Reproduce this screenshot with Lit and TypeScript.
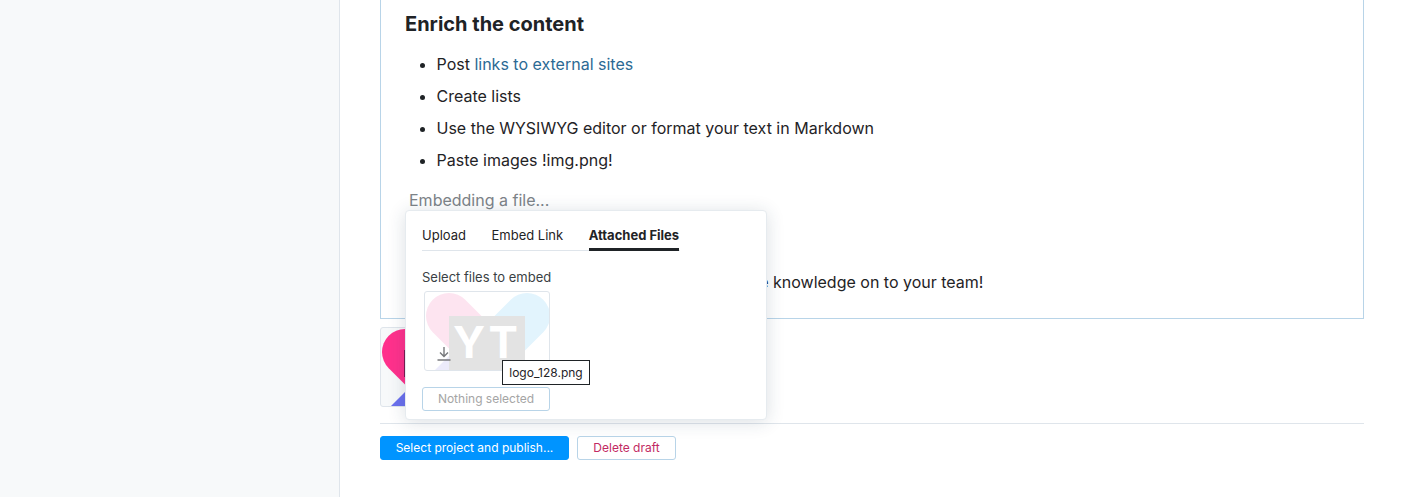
import { LitElement, html, css, svg } from 'lit';
import { customElement } from 'lit/decorators.js';

// same logo artwork for the attachment behind the popup and the faded thumb
const heartLogo = svg`
  <path d="M8 80 L63 25 L100 80 Z" fill="var(--heart-low)"/>
  <path d="M102 24 L66 60" stroke="var(--heart-right)" stroke-width="46" stroke-linecap="round"/>
  <path d="M24 24 L60 60" stroke="var(--heart-left)" stroke-width="46" stroke-linecap="round"/>
`;

@customElement('app-root')
export class AppRoot extends LitElement {
  static styles = css`
    :host {
      display: flex;
      height: 497px;
      overflow: hidden;
      background: #fff;
      color: #1f2326;
      font-family: Inter, "Liberation Sans", sans-serif;
      font-size: 16px;
    }

    .sidebar {
      flex: 0 0 339px;
      background: #f7f9fa;
      border-right: 1px solid #dfe5eb;
    }

    .main {
      flex: 1;
      min-width: 0;
      padding: 0 37px 0 40px;
      position: relative;
    }

    .editor {
      height: 319px;
      box-sizing: border-box;
      border: 1px solid #b8d4e8;
      border-top: none;
      padding: 10px 24px 0;
    }

    h2 {
      margin: 0;
      height: 28px;
      font-size: 20px;
      line-height: 28px;
      font-weight: 700;
    }

    ul {
      margin: 10px 0 0;
      padding-left: 31.5px;
    }

    li {
      height: 32px;
      line-height: 32px;
    }

    a {
      color: #2c6a94;
      text-decoration: none;
    }

    .embedding {
      margin: 12px 0 0 4px;
      line-height: 24px;
      color: #7d8388;
    }

    .closing {
      margin: 58px 0 0 339.5px;
      line-height: 24px;
      white-space: nowrap;
    }

    .attachment {
      width: 126px;
      height: 80px;
      margin-top: 8px;
      box-sizing: border-box;
      border: 1px solid #dfe5eb;
      border-radius: 3px;
      background: #f7f9fa;
      overflow: hidden;
      --heart-left: #ff318c;
      --heart-right: #6fc9f5;
      --heart-low: #6b70ee;
    }

    .attachment svg {
      display: block;
      width: 124px;
      height: 78px;
    }

    .footer {
      margin-top: 16px;
      padding-top: 12px;
      border-top: 1px solid #dfe5eb;
      display: flex;
      gap: 8px;
    }

    button {
      height: 24px;
      box-sizing: border-box;
      border-radius: 3px;
      font-family: inherit;
      font-size: 12px;
      line-height: 22px;
      padding: 0;
    }

    .primary {
      width: 189px;
      border: 1px solid #0094ff;
      background: #0094ff;
      color: #fff;
    }

    .danger {
      width: 99px;
      border: 1px solid #b8d4e8;
      background: #fff;
      color: #c22a63;
    }

    .popup {
      position: absolute;
      left: 65px;
      top: 210px;
      width: 362px;
      height: 210px;
      box-sizing: border-box;
      padding: 12px 16px 0;
      background: #fff;
      border: 1px solid #e6ebef;
      border-radius: 4px;
      box-shadow: 0 2px 18px rgba(31, 55, 80, 0.16);
      font-size: 13px;
    }

    .tabs {
      display: flex;
      gap: 25.5px;
      width: 258px;
      height: 27px;
      border-bottom: 1px solid #dfe5eb;
    }

    .tab {
      line-height: 25px;
      height: 28px;
      box-sizing: border-box;
      white-space: nowrap;
    }

    .tab.active {
      font-weight: 700;
      border-bottom: 3px solid #1f2326;
    }

    .label {
      margin-top: 16px;
      line-height: 20px;
      color: #3a3f44;
    }

    .thumb {
      position: relative;
      width: 126px;
      height: 80px;
      margin: 4px 0 0 2px;
      box-sizing: border-box;
      border: 1px solid #dfe5eb;
      border-radius: 3px;
      overflow: hidden;
      --heart-left: #fde4f0;
      --heart-right: #e2f4fd;
      --heart-low: #ecebfb;
    }

    .thumb > svg.art {
      display: block;
      width: 124px;
      height: 78px;
    }

    .yt {
      position: absolute;
      left: 24px;
      top: 24px;
      width: 76px;
      height: 54px;
      background: #e3e3e3;
      color: #fff;
      font-size: 44px;
      font-weight: 700;
      line-height: 52px;
      letter-spacing: 3px;
      text-align: center;
    }

    .download {
      position: absolute;
      left: 12px;
      top: 54px;
      width: 14px;
      height: 16px;
    }

    .tip {
      position: absolute;
      left: 96px;
      top: 149px;
      width: 88px;
      height: 25px;
      box-sizing: border-box;
      border: 1px solid #1f2326;
      background: #fff;
      font-size: 12px;
      line-height: 23px;
      text-align: center;
      white-space: nowrap;
    }

    .none {
      display: block;
      width: 128px;
      margin-top: 16px;
      border: 1px solid #b8d4e8;
      background: #fff;
      color: #a5a5a5;
    }
  `;

  render() {
    return html`
      <div class="sidebar"></div>
      <div class="main">
        <div class="editor">
          <h2>Enrich the content</h2>
          <ul>
            <li>Post <a href="#">links to external sites</a></li>
            <li>Create lists</li>
            <li>Use the WYSIWYG editor or format your text in Markdown</li>
            <li>Paste images !img.png!</li>
          </ul>
          <div class="embedding">Embedding a file...</div>
          <div class="closing">the knowledge on to your team!</div>
        </div>

        <div class="attachment">
          <svg viewBox="0 0 124 78">
            ${heartLogo}
            <rect x="23" y="22" width="1" height="27" fill="#7a1a50"/>
          </svg>
        </div>

        <div class="footer">
          <button class="primary">Select project and publish...</button>
          <button class="danger">Delete draft</button>
        </div>

        <div class="popup">
          <div class="tabs">
            <div class="tab">Upload</div>
            <div class="tab">Embed Link</div>
            <div class="tab active">Attached Files</div>
          </div>
          <div class="label">Select files to embed</div>
          <div class="thumb">
            <svg class="art" viewBox="0 0 124 78">${heartLogo}</svg>
            <div class="yt">YT</div>
            <svg class="download" viewBox="0 0 14 16" fill="none" stroke="#77797c" stroke-width="1.4">
              <path d="M7 1 V10 M3 6.5 L7 10.5 L11 6.5"/>
              <path d="M0.5 14 H13.5"/>
            </svg>
          </div>
          <div class="tip">logo_128.png</div>
          <button class="none">Nothing selected</button>
        </div>
      </div>
    `;
  }
}
